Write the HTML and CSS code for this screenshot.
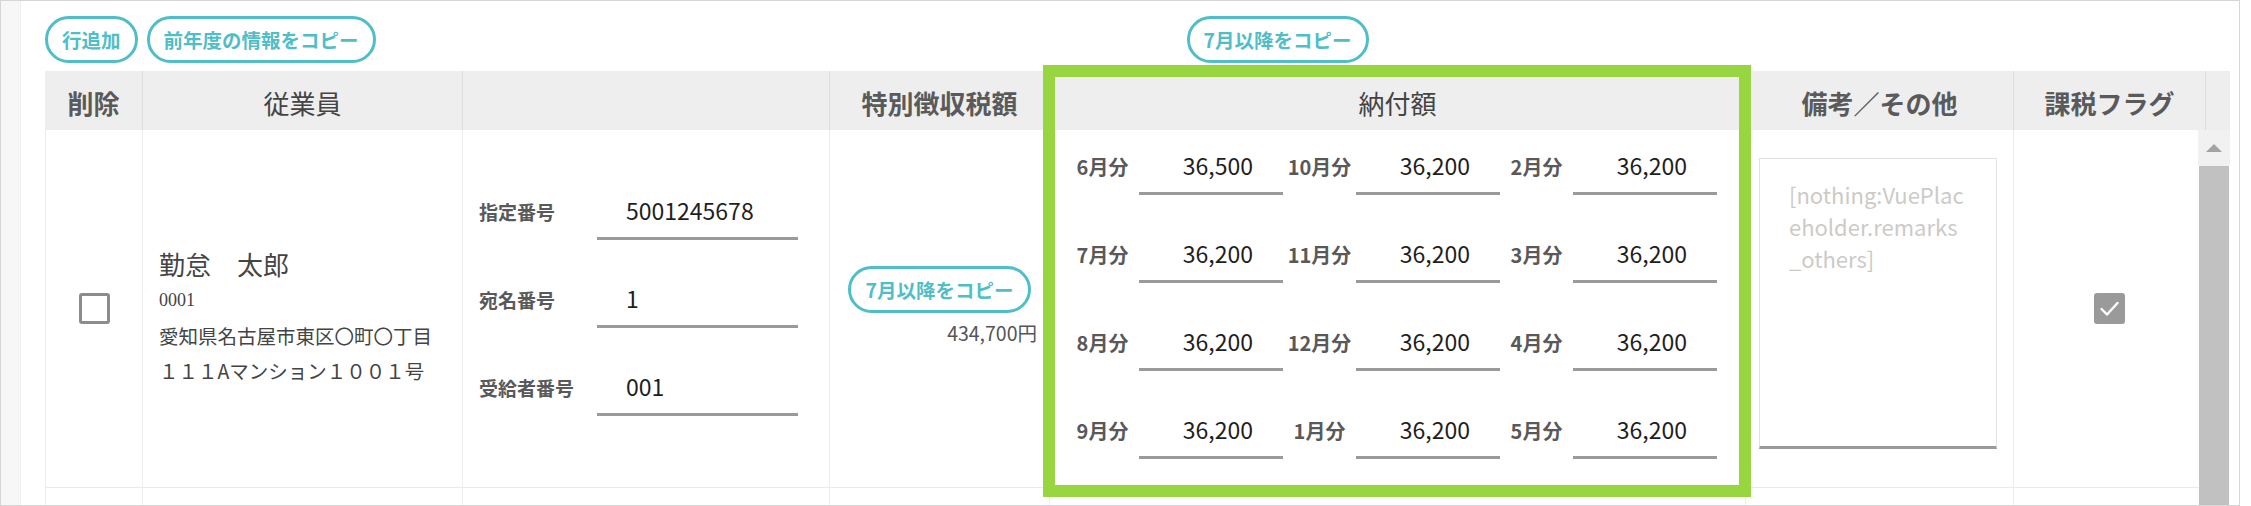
FILE: index.html
```html
<!DOCTYPE html>
<html lang="ja">
<head>
<meta charset="utf-8">
<title>特別徴収</title>
<link rel="stylesheet" href="styles.css">
</head>
<body>
<div class="frame">
  <div class="strip"></div>
  <div class="main">
    <div class="toolbar">
      <button class="pill">行追加</button>
      <button class="pill">前年度の情報をコピー</button>
      <button class="pill pill-shift">7月以降をコピー</button>
    </div>
    <div class="table">
      <div class="thead">
        <div class="th th-bold">削除</div>
        <div class="th">従業員</div>
        <div class="th"></div>
        <div class="th th-bold">特別徴収税額</div>
        <div class="th">納付額</div>
        <div class="th th-bold">備考／その他</div>
        <div class="th th-bold">課税フラグ</div>
        <div class="th th-gutter"></div>
      </div>
      <div class="tbody">
        <div class="row">
          <div class="td td-center"><span class="checkbox"></span></div>
          <div class="td td-emp">
            <div class="emp-name">勤怠　太郎</div>
            <div class="emp-code">0001</div>
            <div class="emp-addr">愛知県名古屋市東区〇町〇丁目</div>
            <div class="emp-addr">１１１Aマンション１００１号</div>
          </div>
          <div class="td td-fields">
            <div class="field"><span class="field-label">指定番号</span><span class="field-input">5001245678</span></div>
            <div class="field"><span class="field-label">宛名番号</span><span class="field-input">1</span></div>
            <div class="field"><span class="field-label">受給者番号</span><span class="field-input">001</span></div>
          </div>
          <div class="td td-tax">
            <button class="pill">7月以降をコピー</button>
            <div class="tax-total">434,700円</div>
          </div>
          <div class="td td-pay">
            <div class="months">
              <span class="m-label">6月分</span><span class="m-input">36,500</span>
              <span class="m-label">10月分</span><span class="m-input">36,200</span>
              <span class="m-label">2月分</span><span class="m-input">36,200</span>
              <span class="m-label">7月分</span><span class="m-input">36,200</span>
              <span class="m-label">11月分</span><span class="m-input">36,200</span>
              <span class="m-label">3月分</span><span class="m-input">36,200</span>
              <span class="m-label">8月分</span><span class="m-input">36,200</span>
              <span class="m-label">12月分</span><span class="m-input">36,200</span>
              <span class="m-label">4月分</span><span class="m-input">36,200</span>
              <span class="m-label">9月分</span><span class="m-input">36,200</span>
              <span class="m-label">1月分</span><span class="m-input">36,200</span>
              <span class="m-label">5月分</span><span class="m-input">36,200</span>
            </div>
          </div>
          <div class="td td-remarks">
            <div class="remarks">
              <span class="ph-line">[nothing:VuePlac</span>
              <span class="ph-line">eholder.remarks</span>
              <span class="ph-line">_others]</span>
            </div>
          </div>
          <div class="td td-center">
            <span class="checkbox checkbox-on">
              <svg viewBox="0 0 31 31" width="31" height="31"><polyline points="7.5,16 13,21.5 23.5,10" fill="none" stroke="#fff" stroke-width="2.4" stroke-linecap="round" stroke-linejoin="round"/></svg>
            </span>
          </div>
        </div>
        <div class="row row-next">
          <div class="td"></div><div class="td"></div><div class="td"></div><div class="td"></div><div class="td"></div><div class="td"></div><div class="td"></div>
        </div>
      </div>
      <div class="scrollbar"><div class="sb-arrow"><span class="sb-tri"></span></div><div class="sb-thumb"></div></div>
      <div class="highlight"></div>
    </div>
  </div>
</div>
</body>
</html>
```
FILE: styles.css
```css
* { box-sizing: border-box; }
html, body { margin: 0; padding: 0; background: #fff; }
body { font-family: "Noto Sans CJK JP", "Noto Sans", sans-serif; color: #444; }

.frame {
  width: 2240px;
  height: 506px;
  border: 1px solid #d6d6d6;
  display: flex;
  overflow: hidden;
}
.strip {
  width: 20px;
  flex: none;
  background: #f7f7f7;
  border-right: 1px solid #efefef;
}
.main {
  flex: 1;
  padding: 15px 0 0 24px;
  min-width: 0;
}

.toolbar { display: flex; gap: 9px; height: 47px; }
.pill {
  height: 47px;
  padding: 0 14px;
  border: 3px solid #4fbec8;
  border-radius: 24px;
  background: #fff;
  color: #4fbec8;
  font-family: "Noto Sans CJK JP", sans-serif;
  font-weight: 700;
  font-size: 19.5px;
  line-height: 1;
  white-space: nowrap;
}
.pill-shift { margin-left: 802px; }

.table { position: relative; margin-top: 8px; width: 2185px; }

.thead {
  display: grid;
  grid-template-columns: 97px 320px 367px 220px 696px 268px 192px 25px;
  height: 59px;
  background: #eeeeee;
}
.th {
  display: flex;
  align-items: center;
  justify-content: center;
  font-size: 26px;
  color: #444;
  padding-top: 4px;
  border-left: 1px solid #dddddd;
}
.th:first-child { border-left: none; }
.th-bold { font-weight: 700; color: #5a5a5a; }

.tbody { height: 375px; overflow: hidden; width: 2160px; }
.row {
  display: grid;
  grid-template-columns: 97px 320px 367px 220px 696px 268px 192px;
  height: 358px;
  border-bottom: 1px solid #e9e9ef;
}
.row-next { height: 40px; }
.td { border-left: 1px solid #ececf1; }

.td-center { display: flex; align-items: center; justify-content: center; }
.checkbox {
  width: 31px; height: 31px;
  border: 3px solid #8c8c8c;
  border-radius: 3px;
  background: #fff;
  display: block;
}
.checkbox-on { background: #9a9a9a; border: none; }
.checkbox-on svg { display: block; }

.td-emp {
  display: flex;
  flex-direction: column;
  justify-content: center;
  padding: 16px 0 0 16px;
}
.emp-name { font-size: 26px; line-height: 36px; color: #444; }
.emp-code { font-family: "Liberation Serif", "DejaVu Serif", serif; font-size: 18px; line-height: 36px; color: #444; }
.emp-addr { font-size: 19.5px; line-height: 35px; color: #444; white-space: nowrap; }

.td-fields {
  display: flex;
  flex-direction: column;
  gap: 32px;
  padding: 54px 31px 0 16px;
}
.field { display: flex; height: 56px; }
.field-label {
  width: 118px;
  font-size: 19px;
  font-weight: 700;
  color: #595959;
  line-height: 56px;
}
.field-input {
  flex: 1;
  border-bottom: 3px solid #9a9a9a;
  padding-left: 29px;
  font-size: 23px;
  line-height: 53px;
  color: #1e1e1e;
}

.td-tax {
  display: flex;
  flex-direction: column;
  justify-content: center;
  align-items: center;
  padding-bottom: 6px;
}
.tax-total {
  align-self: stretch;
  text-align: right;
  padding-right: 12px;
  font-size: 19.5px;
  line-height: 24px;
  color: #555;
  margin-top: 8px;
}

.td-pay { padding: 9px 29px 0 16px; }
.months {
  display: grid;
  grid-template-columns: repeat(3, 73px 144px);
  grid-auto-rows: 56px;
  row-gap: 32px;
}
.m-label {
  text-align: center;
  font-size: 20px;
  font-weight: 700;
  color: #595959;
  line-height: 56px;
}
.m-input {
  border-bottom: 3px solid #9a9a9a;
  text-align: right;
  padding-right: 30px;
  font-size: 23px;
  line-height: 53px;
  color: #1e1e1e;
}

.td-remarks { padding: 28px 16px 0 13px; }
.remarks {
  height: 291px;
  border: 1px solid #e2e2e2;
  border-bottom: 3px solid #9a9a9a;
  padding: 19px 0 0 29px;
  display: flex;
  flex-direction: column;
}
.ph-line {
  font-size: 22px;
  line-height: 32px;
  color: #cdcac6;
  white-space: nowrap;
}

.scrollbar {
  position: absolute;
  left: 2153px;
  top: 59px;
  width: 32px;
  bottom: -60px;
  display: flex;
  flex-direction: column;
}
.sb-arrow {
  height: 36px;
  background: #f1f1f1;
  display: flex;
  justify-content: center;
  align-items: center;
}
.sb-tri {
  width: 0; height: 0;
  border-left: 8px solid transparent;
  border-right: 8px solid transparent;
  border-bottom: 8px solid #a3a3a3;
}
.sb-thumb { flex: 1; background: #c1c1c1; margin: 0 1px; }

.highlight {
  position: absolute;
  left: 998px;
  top: -6px;
  width: 708px;
  height: 432px;
  border: 12px solid #97d541;
  pointer-events: none;
}
```
